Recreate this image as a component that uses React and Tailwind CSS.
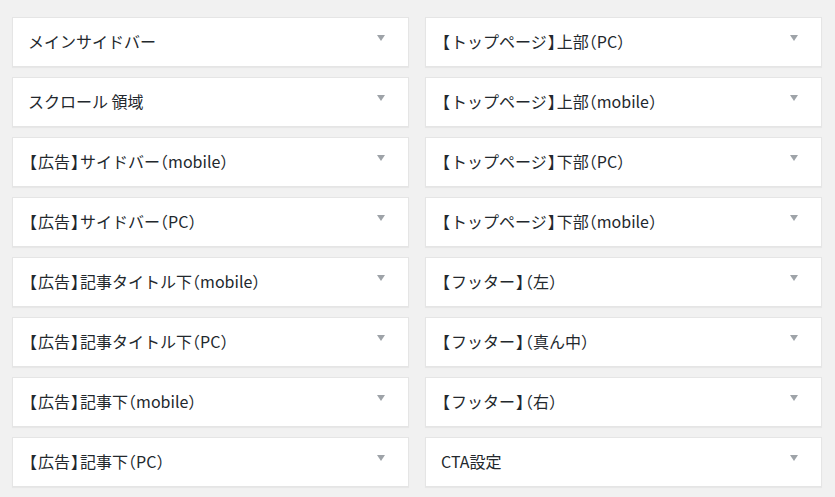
import React from 'react';

const left = [
  'メインサイドバー',
  'スクロール 領域',
  '【広告】サイドバー（mobile）',
  '【広告】サイドバー（PC）',
  '【広告】記事タイトル下（mobile）',
  '【広告】記事タイトル下（PC）',
  '【広告】記事下（mobile）',
  '【広告】記事下（PC）',
];

const right = [
  '【トップページ】上部（PC）',
  '【トップページ】上部（mobile）',
  '【トップページ】下部（PC）',
  '【トップページ】下部（mobile）',
  '【フッター】（左）',
  '【フッター】（真ん中）',
  '【フッター】（右）',
  'CTA設定',
];

// tighten the full-width brackets so they sit like the original font
const Title = ({ text }) => (
  <>
    {text.split(/([【】（）])/).map((part, i) => {
      if (part === '【' || part === '】') {
        return (
          <span key={i} className="mx-[1px] [font-feature-settings:'halt']">
            {part}
          </span>
        );
      }
      if (part === '（' || part === '）') {
        return (
          <span key={i} className="[font-feature-settings:'halt']">
            {part}
          </span>
        );
      }
      return part;
    })}
  </>
);

const WidgetBox = ({ title }) => (
  <div className="flex h-[50px] items-center justify-between border border-[#e5e5e5] bg-white pl-[15px] pr-[23px] shadow-[0_1px_1px_rgba(0,0,0,0.04)]">
    <h3 className="mb-[3px] text-[16px] font-normal leading-none text-[#23282d]">
      <Title text={title} />
    </h3>
    <span className="mb-[8px] h-0 w-0 border-x-[4.5px] border-t-[6px] border-x-transparent border-t-[#9ea3a8]" />
  </div>
);

const App = () => {
  const rows = left.map((title, i) => [title, right[i]]).flat();

  return (
    <div
      className="min-h-[497px] bg-[#f1f1f1] pl-[12px] pr-[13px] pt-[17px] pb-[10px]"
      style={{ fontFamily: '"Noto Sans CJK JP", "Noto Sans", sans-serif' }}
    >
      <div className="grid grid-cols-2 gap-x-[16px] gap-y-[10px]">
        {rows.map((title, i) => (
          <WidgetBox key={i} title={title} />
        ))}
      </div>
    </div>
  );
};

export default App;
